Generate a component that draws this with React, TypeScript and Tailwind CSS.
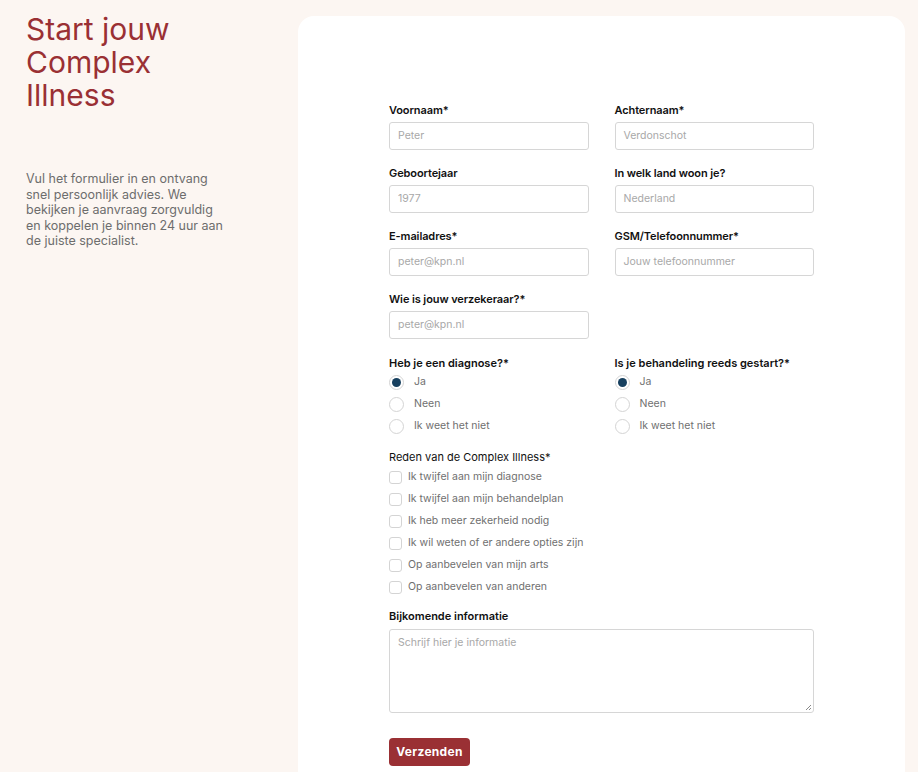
import React from "react";

const font = { fontFamily: "Inter, 'Noto Sans', sans-serif" };

function Field({ label, placeholder }: { label: string; placeholder: string }) {
  return (
    <div className="flex flex-col">
      <label className="text-[11px] leading-[14px] font-semibold text-[#111] mb-[5px] tracking-[-0.1px]">{label}</label>
      <div className="h-[28px] border border-[#d6d6d6] rounded-[3px] bg-white flex items-center px-[8px] text-[10.5px] text-[#a8a8a8]">
        {placeholder}
      </div>
    </div>
  );
}

function Radio({ label, checked }: { label: string; checked?: boolean }) {
  return (
    <div className="h-[22px] flex items-center">
      <span className="w-[15px] h-[15px] rounded-full border border-[#d4d4d4] bg-white flex items-center justify-center">
        {checked && <span className="w-[9px] h-[9px] rounded-full bg-[#17405f]" />}
      </span>
      <span className="ml-[10px] text-[10.5px] text-[#6f6f6f]">{label}</span>
    </div>
  );
}

function Check({ label }: { label: string }) {
  return (
    <div className="h-[22px] flex items-center">
      <span className="w-[13px] h-[13px] rounded-[3px] border border-[#d4d4d4] bg-white" />
      <span className="ml-[6px] text-[10.5px] text-[#6f6f6f]">{label}</span>
    </div>
  );
}

export default function App() {
  return (
    <div className="w-[918px] h-[772px] overflow-hidden bg-[#fcf6f2] flex" style={font}>
      <div className="w-[298px] shrink-0 pl-[26px] pt-[13px]">
        <h1 className="text-[30px] leading-[33px] text-[#9a3034] font-normal">
          Start jouw
          <br />
          Complex
          <br />
          Illness
        </h1>
        <p className="mt-[59px] w-[202px] text-[12.5px] leading-[15.5px] text-[#6d6d6d]">
          Vul het formulier in en ontvang snel persoonlijk advies. We bekijken je aanvraag zorgvuldig en koppelen je binnen 24 uur aan de juiste specialist.
        </p>
      </div>
      <div className="mt-[16px] w-[607px] h-[800px] bg-white rounded-[16px] pt-[87px] px-[91px]">
        <div className="grid grid-cols-2 gap-x-[26px] gap-y-[16px]">
          <Field label="Voornaam*" placeholder="Peter" />
          <Field label="Achternaam*" placeholder="Verdonschot" />
          <Field label="Geboortejaar" placeholder="1977" />
          <Field label="In welk land woon je?" placeholder="Nederland" />
          <Field label="E-mailadres*" placeholder="peter@kpn.nl" />
          <Field label="GSM/Telefoonnummer*" placeholder="Jouw telefoonnummer" />
          <Field label="Wie is jouw verzekeraar?*" placeholder="peter@kpn.nl" />
          <div />
          <div className="flex flex-col mt-[1px]">
            <div className="text-[11px] leading-[14px] font-semibold text-[#111] mb-[1px]">Heb je een diagnose?*</div>
            <Radio label="Ja" checked />
            <Radio label="Neen" />
            <Radio label="Ik weet het niet" />
          </div>
          <div className="flex flex-col mt-[1px]">
            <div className="text-[11px] leading-[14px] font-semibold text-[#111] mb-[1px]">Is je behandeling reeds gestart?*</div>
            <Radio label="Ja" checked />
            <Radio label="Neen" />
            <Radio label="Ik weet het niet" />
          </div>
        </div>
        <div className="mt-[13px] flex flex-col">
          <div className="text-[11px] leading-[14px] text-[#111] mb-[2px]">Reden van de Complex Illness*</div>
          <Check label="Ik twijfel aan mijn diagnose" />
          <Check label="Ik twijfel aan mijn behandelplan" />
          <Check label="Ik heb meer zekerheid nodig" />
          <Check label="Ik wil weten of er andere opties zijn" />
          <Check label="Op aanbevelen van mijn arts" />
          <Check label="Op aanbevelen van anderen" />
        </div>
        <div className="mt-[11px] flex flex-col">
          <div className="text-[11px] leading-[14px] font-semibold text-[#111] mb-[6px]">Bijkomende informatie</div>
          <div className="relative h-[84px] border border-[#d6d6d6] rounded-[3px] px-[8px] pt-[5px] text-[10.5px] text-[#a8a8a8]">
            Schrijf hier je informatie
            <svg className="absolute right-[1px] bottom-[1px]" width="8" height="8" viewBox="0 0 8 8">
              <path d="M7 2 L2 7 M7 5 L5 7" stroke="#8a8a8a" strokeWidth="1" />
            </svg>
          </div>
        </div>
        <button className="mt-[25px] h-[28px] w-[81px] rounded-[4px] bg-[#9a3034] text-white text-[12px] font-bold tracking-[0.3px]">
          Verzenden
        </button>
      </div>
    </div>
  );
}
